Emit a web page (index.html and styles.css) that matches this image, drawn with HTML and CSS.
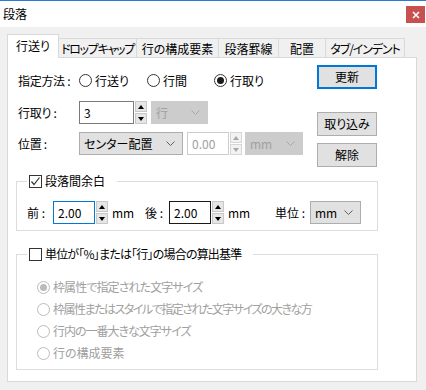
FILE: index.html
```html
<!DOCTYPE html>
<html lang="ja">
<head>
<meta charset="utf-8">
<title>段落</title>
<link rel="stylesheet" href="styles.css">
</head>
<body>
<div class="window">
  <div class="titlebar">
    <span class="title">段落</span>
    <span class="close"><svg width="8" height="8" viewBox="0 0 8 8"><path d="M1 1L7 7M7 1L1 7" stroke="#fff" stroke-width="1.6"/></svg></span>
  </div>
  <div class="client">
    <div class="tabs">
      <div class="tab active t1">行送り</div>
      <div class="tab t2">ドロップキャップ</div>
      <div class="tab t3">行の構成要素</div>
      <div class="tab t4">段落罫線</div>
      <div class="tab t5">配置</div>
      <div class="tab t6">タブ/インデント</div>
    </div>
    <div class="panel">
      <div class="top">
        <div class="fields">
          <div class="row">
            <span class="label">指定方法 :</span>
            <span class="radio w68"><span class="rb"></span>行送り</span>
            <span class="radio w67"><span class="rb"></span>行間</span>
            <span class="radio"><span class="rb on"></span>行取り</span>
          </div>
          <div class="row gap9">
            <span class="label">行取り :</span>
            <span class="input w55">3</span>
            <span class="spin"><span class="up"></span><span class="down"></span></span>
            <span class="combo disabled w57 ml4">行<svg class="chev" width="9" height="5" viewBox="0 0 9 5"><polyline points="0.5,0.5 4.5,4.5 8.5,0.5" fill="none" stroke="currentColor"/></svg></span>
          </div>
          <div class="row gap8">
            <span class="label">位置 :</span>
            <span class="combo w104">センター配置<svg class="chev" width="9" height="5" viewBox="0 0 9 5"><polyline points="0.5,0.5 4.5,4.5 8.5,0.5" fill="none" stroke="currentColor"/></svg></span>
            <span class="input disabled w42 ml4">0.00</span>
            <span class="spin disabled"><span class="up"></span><span class="down"></span></span>
            <span class="combo disabled w58 ml3">mm<svg class="chev" width="9" height="5" viewBox="0 0 9 5"><polyline points="0.5,0.5 4.5,4.5 8.5,0.5" fill="none" stroke="currentColor"/></svg></span>
          </div>
        </div>
        <div class="buttons">
          <span class="btn default">更新</span>
          <span class="btn b2">取り込み</span>
          <span class="btn b3">解除</span>
        </div>
      </div>

      <fieldset class="group g1">
        <legend><span class="cb on"><svg width="11" height="11" viewBox="0 0 11 11"><polyline points="1.5,5.5 4,8.5 9.5,1.5" fill="none" stroke="#333" stroke-width="1.2"/></svg></span>段落間余白</legend>
        <div class="row">
          <span class="lbl w26">前 :</span>
          <span class="input focus w42">2.00</span>
          <span class="spin"><span class="up"></span><span class="down"></span></span>
          <span class="unit w37">mm</span>
          <span class="lbl w24">後 :</span>
          <span class="input dark w42">2.00</span>
          <span class="spin"><span class="up"></span><span class="down"></span></span>
          <span class="unit w51">mm</span>
          <span class="lbl w35">単位 :</span>
          <span class="combo w51">mm<svg class="chev" width="9" height="5" viewBox="0 0 9 5"><polyline points="0.5,0.5 4.5,4.5 8.5,0.5" fill="none" stroke="currentColor"/></svg></span>
        </div>
      </fieldset>

      <fieldset class="group g2">
        <legend><span class="cb"></span><span class="ls-legend">単位が「%」または「行」の場合の算出基準</span></legend>
        <div class="opts">
          <span class="radio dis"><span class="rb on"></span><span class="ls1">枠属性で指定された文字サイズ</span></span>
          <span class="radio dis"><span class="rb"></span><span class="ls2">枠属性またはスタイルで指定された文字サイズの大きな方</span></span>
          <span class="radio dis"><span class="rb"></span><span class="ls3">行内の一番大きな文字サイズ</span></span>
          <span class="radio dis"><span class="rb"></span>行の構成要素</span>
        </div>
      </fieldset>
    </div>
  </div>
</div>
</body>
</html>
```

FILE: styles.css
```css
* { box-sizing: border-box; }
html, body { margin: 0; padding: 0; }
body {
  width: 426px;
  height: 390px;
  overflow: hidden;
  background: #f0f0f0;
  font-family: "Noto Sans CJK JP", "Noto Sans", sans-serif;
  font-size: 12px;
  font-feature-settings: "palt";
  color: #000;
}
.window { width: 426px; height: 390px; background: #f0f0f0; }

.titlebar {
  height: 27px;
  border-top: 1px solid #2b7ad6;
  background: #fff;
  display: flex;
  align-items: center;
  justify-content: space-between;
}
.title { padding-left: 3px; line-height: 14px; margin-top: -1px; }
.close {
  width: 19px;
  height: 17px;
  margin-right: 1px;
  margin-top: 1px;
  background: #c75050;
  display: flex;
  align-items: center;
  justify-content: center;
}

.client { padding: 7px 0 0 7px; }

.tabs {
  display: flex;
  align-items: flex-end;
  height: 23px;
  position: relative;
  z-index: 2;
}
.tab {
  height: 19px;
  border: 1px solid #d9d9d9;
  border-bottom: none;
  margin-right: -1px;
  background: #f0f0f0;
  display: flex;
  align-items: center;
  justify-content: center;
  line-height: 14px;
  padding-top: 1px;
  white-space: nowrap;
  overflow: hidden;
}
.tab.active {
  height: 24px;
  margin-bottom: -1px;
  background: #fff;
  padding-top: 0;
  padding-bottom: 2px;
}
.t1 { width: 52px; }
.t2 { width: 79px; letter-spacing: -1.3px; }
.t3 { width: 83px; }
.t4 { width: 61px; }
.t5 { width: 48px; }
.t6 { width: 80px; letter-spacing: -1.1px; }

.panel {
  width: 410px;
  height: 325px;
  border: 1px solid #d9d9d9;
  background: #fff;
  padding-left: 8px;
}

.top { display: flex; }
.fields { width: 301px; padding-top: 11px; }
.row { display: flex; align-items: center; height: 23px; white-space: nowrap; }
.gap9 { margin-top: 9px; }
.gap8 { margin-top: 8px; }
.label { width: 63px; padding-left: 2px; line-height: 14px; letter-spacing: -0.3px; }

.radio { display: flex; align-items: center; line-height: 14px; white-space: nowrap; }
.rb {
  width: 13px;
  height: 13px;
  border: 1px solid #333;
  border-radius: 50%;
  margin-right: 3px;
  display: flex;
  align-items: center;
  justify-content: center;
  flex: none;
}
.rb.on::after {
  content: "";
  width: 7px;
  height: 7px;
  border-radius: 50%;
  background: #1a1a1a;
}
.radio.dis { color: #a0a0a0; height: 22px; }
.radio.dis .rb { border-color: #bcbcbc; margin-right: 3px; }
.radio.dis .rb.on::after { background: #bcbcbc; }
.w68 { width: 68px; }
.w67 { width: 67px; }
.ls1 { letter-spacing: -0.9px; }
.ls2 { letter-spacing: -1.5px; }
.ls3 { letter-spacing: -1px; }
.ls-legend { letter-spacing: -0.8px; }

.input {
  height: 23px;
  border: 1px solid #7a7a7a;
  background: #fff;
  padding-left: 4px;
  display: flex;
  align-items: center;
  line-height: 14px;
  flex: none;
}
.input.focus { border-color: #0078d7; }
.input.dark { border-color: #1a1a1a; }
.input.disabled { border-color: #cccccc; color: #a0a0a0; }
.w55 { width: 55px; }
.w42 { width: 42px; }
.w104 { width: 104px; }
.w57 { width: 57px; }
.w58 { width: 58px; }
.w51 { width: 51px; }
.ml4 { margin-left: 4px; }
.ml3 { margin-left: 3px; }

.spin {
  width: 12px;
  height: 23px;
  margin-left: 1px;
  display: flex;
  flex-direction: column;
  gap: 1px;
  flex: none;
}
.spin .up, .spin .down {
  flex: 1;
  background: #e6e6e6;
  border: 1px solid #c8c8c8;
  display: flex;
  align-items: center;
  justify-content: center;
}
.spin .up::after {
  content: "";
  border-left: 3px solid transparent;
  border-right: 3px solid transparent;
  border-bottom: 4px solid #000;
}
.spin .down::after {
  content: "";
  border-left: 3px solid transparent;
  border-right: 3px solid transparent;
  border-top: 4px solid #000;
}
.spin.disabled .up, .spin.disabled .down { background: #f2f2f2; border-color: #d6d6d6; }
.spin.disabled .up::after { border-bottom-color: #a8a8a8; }
.spin.disabled .down::after { border-top-color: #a8a8a8; }

.combo {
  height: 23px;
  border: 1px solid #adadad;
  background: #e1e1e1;
  padding: 0 7px 0 4px;
  display: flex;
  align-items: center;
  justify-content: space-between;
  line-height: 14px;
  color: #000;
  flex: none;
}
.combo .chev { color: #606060; flex: none; }
.combo.disabled { background: #cccccc; border-color: #cccccc; color: #a0a0a0; }
.combo.disabled .chev { color: #a8a8a8; }

.buttons { display: flex; flex-direction: column; padding-top: 7px; }
.btn {
  width: 60px;
  height: 24px;
  border: 1px solid #adadad;
  background: #e1e1e1;
  display: flex;
  align-items: center;
  justify-content: center;
  line-height: 14px;
}
.btn.default { border: 2px solid #0078d7; }
.b2 { margin-top: 23px; }
.b3 { margin-top: 7px; }

.group {
  width: 362px;
  margin: 0;
  padding: 0 0 0 10px;
  border: 1px solid #dcdcdc;
  min-width: 0;
}
.group legend {
  margin-left: 0;
  padding: 0 12px 0 2px;
  height: 14px;
  line-height: 14px;
  display: flex;
  align-items: center;
}
.cb {
  width: 13px;
  height: 13px;
  border: 1px solid #333;
  margin-right: 3px;
  display: flex;
  align-items: center;
  justify-content: center;
  background: #fff;
}
.g1 { margin-top: 7px; padding-top: 13px; padding-bottom: 6px; }
.g2 { margin-top: 16px; padding: 15px 0 5px 20px; height: 123px; }
.g2 legend { margin-left: -10px; }
.opts { display: flex; flex-direction: column; }

.lbl { line-height: 14px; flex: none; }
.unit { line-height: 14px; padding-left: 4px; flex: none; }
.w26 { width: 26px; }
.w24 { width: 24px; }
.w35 { width: 35px; }
.w37 { width: 37px; }
```
